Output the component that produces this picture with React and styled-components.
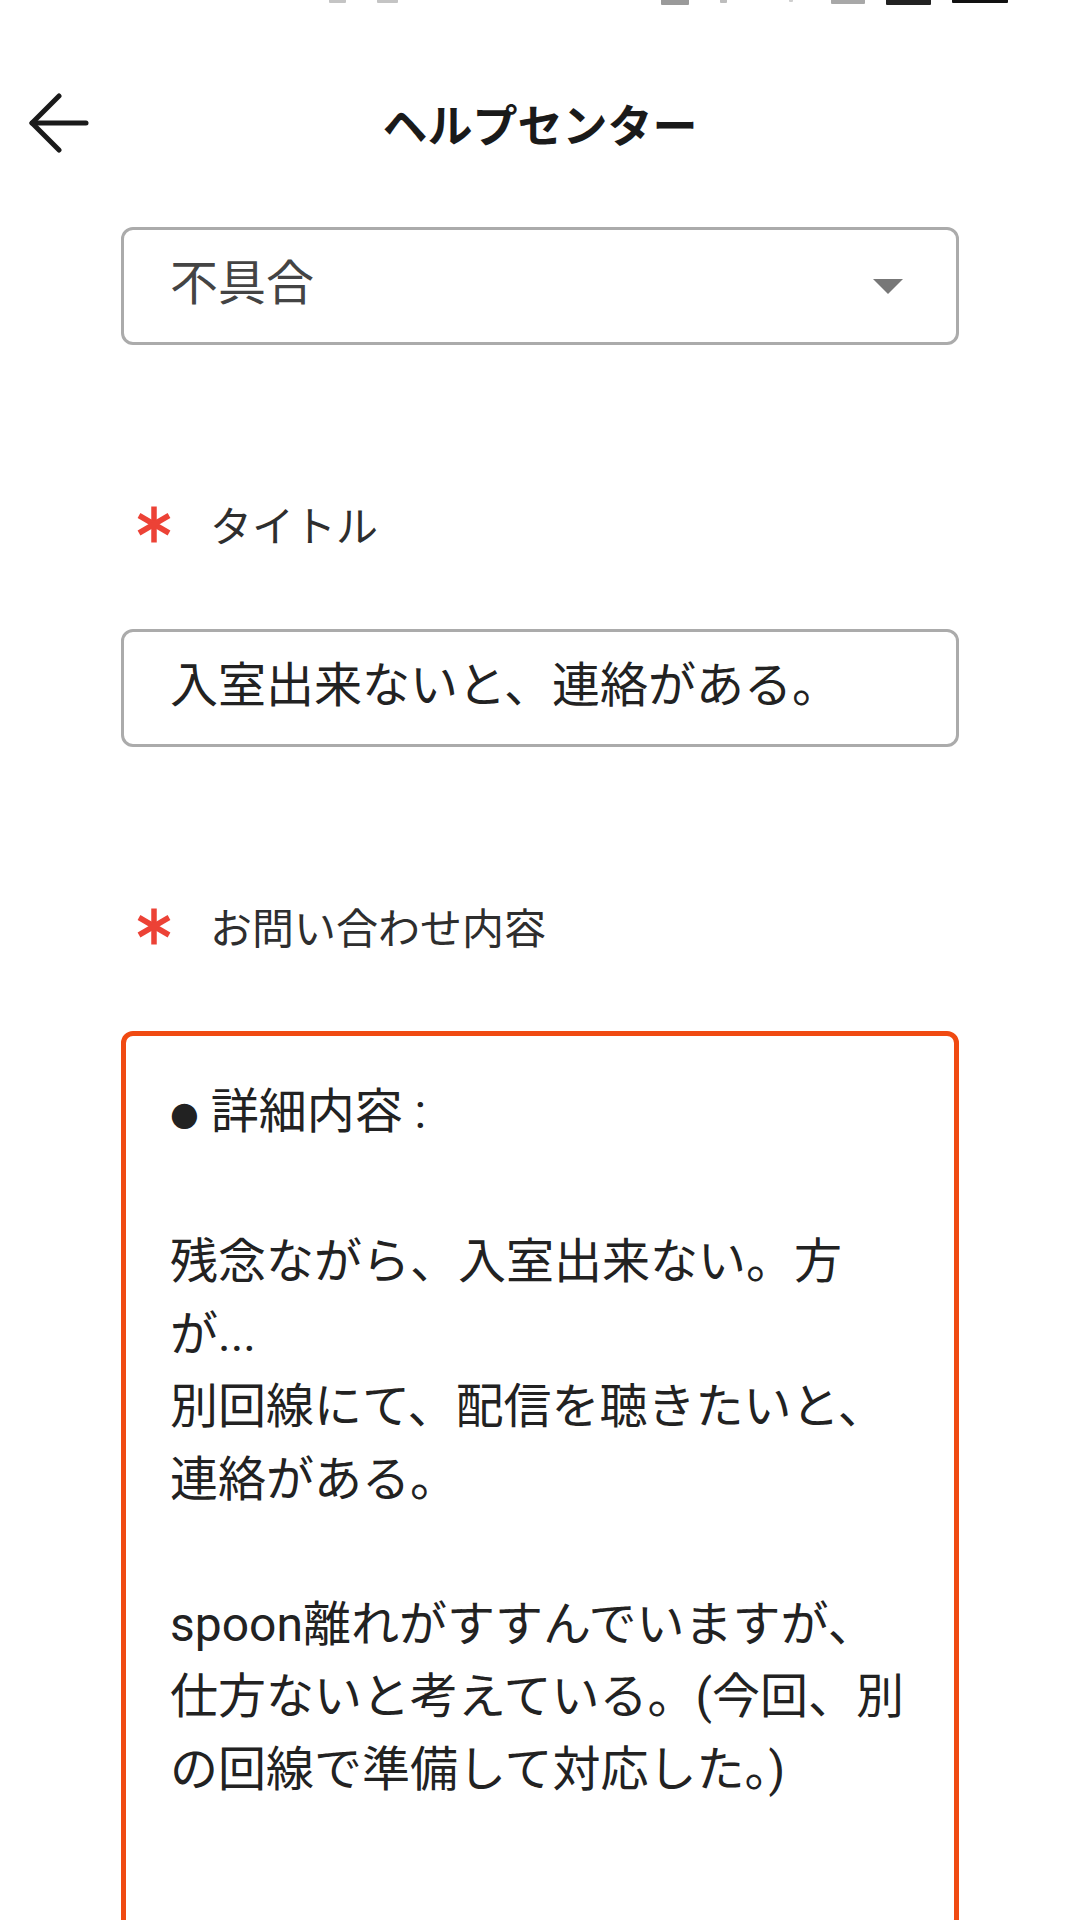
import React from 'react';
import styled, { createGlobalStyle } from 'styled-components';

const GlobalStyle = createGlobalStyle`
  html, body { margin: 0; padding: 0; background: #fff; overflow: hidden; }
  body { font-family: Roboto, "Noto Sans CJK JP", sans-serif; }
  * { box-sizing: border-box; }
`;

const Screen = styled.div`
  width: 1080px;
  height: 1920px;
  overflow: hidden;
  background: #fff;
  display: flex;
  flex-direction: column;
  & > * { flex: none; }
`;

const StatusBar = styled.div`
  display: flex;
  align-items: flex-start;
  height: 6px;
`;

const Mark = styled.span`
  display: block;
  flex: none;
  margin-left: ${(p) => p.$ml}px;
  width: ${(p) => p.$w}px;
  height: ${(p) => p.$h}px;
  background: ${(p) => p.$c};
  border-radius: 0 0 1px 1px;
`;

const Header = styled.header`
  display: grid;
  grid-template-columns: 1fr auto 1fr;
  align-items: center;
  height: 100px;
  margin-top: 67px;
  padding: 0 29px;
`;

const BackButton = styled.button`
  justify-self: start;
  display: flex;
  align-items: center;
  justify-content: center;
  width: 60px;
  height: 60px;
  padding: 0;
  border: 0;
  background: none;
  cursor: pointer;
`;

const Title = styled.h1`
  margin: 0;
  font-family: "Noto Sans CJK JP", sans-serif;
  font-weight: 700;
  font-size: 45px;
  line-height: 1;
  color: #1a1a1a;
`;

const Form = styled.main`
  display: flex;
  flex-direction: column;
  padding: 0 121px;
  margin-top: 54px;
`;

const FieldBox = styled.div`
  display: flex;
  align-items: center;
  justify-content: space-between;
  height: 118px;
  margin-top: ${(p) => p.$mt || 0}px;
  padding: 0 53px 0 46px;
  border: 3px solid #ababab;
  border-radius: 12px;
  font-size: 48px;
  color: ${(p) => (p.$muted ? '#444' : '#222')};
  white-space: nowrap;
`;

const FieldText = styled.span`
  line-height: 64px;
  margin-bottom: 4px;
`;

const LabelRow = styled.div`
  display: flex;
  align-items: center;
  gap: 39px;
  height: 60px;
  margin-top: ${(p) => p.$mt}px;
  padding-left: 16px;
`;

const LabelText = styled.span`
  font-family: "Noto Sans CJK JP", sans-serif;
  font-size: 42px;
  line-height: 60px;
  color: #2e2e2e;
`;

const TextArea = styled.div`
  margin-top: 75px;
  min-height: 900px;
  padding: 40px 44px;
  border: 5px solid #f04a12;
  border-radius: 12px;
  font-size: 48px;
  line-height: 72.5px;
  color: #222;
  white-space: pre;
`;

const Bullet = styled.span`
  font-family: "DejaVu Sans", sans-serif;
  font-size: 33px;
  position: relative;
  top: -3px;
`;

const Asterisk = () => (
  <svg width="34" height="37" viewBox="0 0 34 37" aria-hidden="true">
    <g stroke="#ec4236" strokeWidth="5.5" strokeLinecap="butt">
      <line x1="17" y1="0.5" x2="17" y2="36.5" />
      <line x1="2" y1="9.5" x2="32" y2="27" />
      <line x1="2" y1="27" x2="32" y2="9.5" />
    </g>
  </svg>
);

const ArrowLeft = () => (
  <svg width="60" height="60" viewBox="0 0 60 60" aria-hidden="true">
    <g fill="none" stroke="#1a1a1a" strokeWidth="5" strokeLinecap="round" strokeLinejoin="round">
      <path d="M3 30 H57" />
      <path d="M30 3 L3 30 L30 57" />
    </g>
  </svg>
);

const Caret = () => (
  <svg width="30" height="15" viewBox="0 0 30 15" aria-hidden="true">
    <polygon points="0,0 30,0 15,15" fill="#777" />
  </svg>
);

const marks = [
  { ml: 329, w: 17, h: 3, c: '#c4c4c4' },
  { ml: 31, w: 21, h: 3, c: '#c4c4c4' },
  { ml: 263, w: 28, h: 5, c: '#9a9a9a' },
  { ml: 31, w: 7, h: 3, c: '#bdbdbd' },
  { ml: 62, w: 4, h: 2, c: '#cfcfcf' },
  { ml: 38, w: 34, h: 4, c: '#a8a8a8' },
  { ml: 21, w: 45, h: 5, c: '#222' },
  { ml: 21, w: 56, h: 3, c: '#111' },
];

const body = `

残念ながら、入室出来ない。方
が...
別回線にて、配信を聴きたいと、
連絡がある。

spoon離れがすすんでいますが、
仕方ないと考えている。(今回、別
の回線で準備して対応した。)`;

export default function App() {
  return (
    <>
      <GlobalStyle />
      <Screen>
        <StatusBar>
          {marks.map((m, i) => (
            <Mark key={i} $ml={m.ml} $w={m.w} $h={m.h} $c={m.c} />
          ))}
        </StatusBar>
        <Header>
          <BackButton aria-label="戻る">
            <ArrowLeft />
          </BackButton>
          <Title>ヘルプセンター</Title>
        </Header>
        <Form>
          <FieldBox $muted>
            <FieldText>不具合</FieldText>
            <Caret />
          </FieldBox>
          <LabelRow $mt={149}>
            <Asterisk />
            <LabelText>タイトル</LabelText>
          </LabelRow>
          <FieldBox $mt={75}>
            <FieldText>入室出来ないと、連絡がある。</FieldText>
          </FieldBox>
          <LabelRow $mt={149}>
            <Asterisk />
            <LabelText>お問い合わせ内容</LabelText>
          </LabelRow>
          <TextArea>
            <Bullet>●</Bullet>
            {' 詳細内容 :'}
            {body}
          </TextArea>
        </Form>
      </Screen>
    </>
  );
}
